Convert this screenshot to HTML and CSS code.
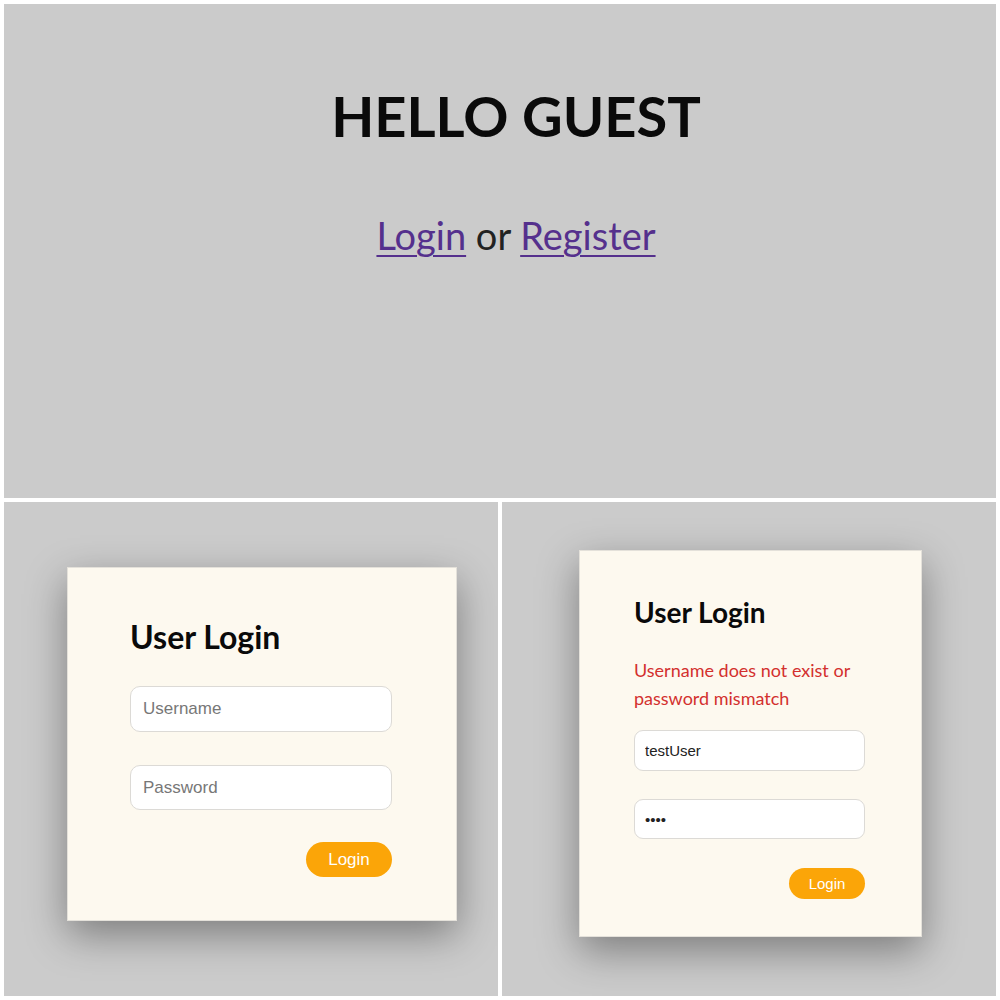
FILE: index.html
```html
<!DOCTYPE html>
<html>
<head>
<meta charset="utf-8">
<link rel="stylesheet" href="styles.css">
</head>
<body>
<div class="grid">
  <section class="panel panel-top">
    <h1 class="hello">HELLO GUEST</h1>
    <p class="links"><a href="#" class="link">Login</a> or <a href="#" class="link">Register</a></p>
  </section>
  <section class="panel panel-left">
    <div class="card card-lg">
      <h2 class="title">User Login</h2>
      <input class="field" type="text" placeholder="Username">
      <input class="field field-2" type="password" placeholder="Password">
      <div class="actions"><button class="btn">Login</button></div>
    </div>
  </section>
  <section class="panel panel-right">
    <div class="card card-sm">
      <h2 class="title">User Login</h2>
      <p class="error">Username does not exist or password mismatch</p>
      <input class="field" type="text" value="testUser">
      <input class="field field-2" type="password" value="abcd">
      <div class="actions"><button class="btn">Login</button></div>
    </div>
  </section>
</div>
</body>
</html>
```
FILE: styles.css
```css
* { box-sizing: border-box; }
html, body { margin: 0; padding: 0; background: #ffffff; }
body { width: 1000px; height: 1000px; padding: 4px; }
.grid {
  display: grid;
  grid-template-columns: 494px 494px;
  grid-template-rows: 494px 494px;
  gap: 4px;
}
.panel { background: #cbcbcb; overflow: hidden; }
.panel-top {
  grid-column: 1 / span 2;
  text-align: center;
  padding-top: 77px;
  padding-left: 32px;
  font-family: Lato, "Liberation Sans", sans-serif;
}
.hello {
  margin: 0;
  font-size: 56px;
  font-weight: 700;
  line-height: 70px;
  color: #0a0a0a;
}
.links {
  margin: 61px 0 0;
  font-size: 38px;
  line-height: 46px;
  color: #222;
}
.link { color: #55308d; text-decoration: underline; text-underline-offset: 5px; text-decoration-thickness: 2px; }

.panel-left { padding: 65px 0 0 63px; }
.panel-right { padding: 48px 0 0 77px; }

.card {
  background: #fdf9ef;
  border: 1px solid #e4e1da;
  box-shadow: 0 14px 38px rgba(0, 0, 0, 0.38);
  display: flex;
  flex-direction: column;
}
.card-lg { width: 390px; height: 354px; padding: 50px 64px 0 62px; }
.card-sm { width: 343px; height: 387px; padding: 44px 56px 0 54px; }

.title {
  margin: 0;
  font-family: Lato, "Liberation Sans", sans-serif;
  font-weight: 700;
  color: #0a0a0a;
}
.card-lg .title { font-size: 32px; line-height: 38px; }
.card-sm .title { font-size: 28px; line-height: 34px; }

.error {
  margin: 27px 0 0;
  font-family: Lato, "Liberation Sans", sans-serif;
  font-size: 18px;
  line-height: 28px;
  color: #d3302e;
}

.field {
  display: block;
  width: 100%;
  border: 1px solid #dcdad6;
  background: #ffffff;
  font-family: "Liberation Sans", Arial, sans-serif;
  color: #222;
  outline: none;
}
.field::placeholder { color: #777; }
.card-lg .field { height: 46px; margin-top: 30px; border-radius: 10px; padding: 0 12px; font-size: 17px; }
.card-lg .field-2 { margin-top: 33px; height: 45px; }
.card-sm .field { height: 41px; margin-top: 18px; border-radius: 9px; padding: 0 10px; font-size: 15px; }
.card-sm .field-2 { margin-top: 28px; height: 40px; }

.actions { display: flex; justify-content: flex-end; }
.btn {
  border: none;
  background: #fba508;
  color: #fff;
  font-family: "Liberation Sans", Arial, sans-serif;
  border-radius: 999px;
  padding: 0;
}
.card-lg .btn { width: 86px; height: 35px; font-size: 17px; margin-top: 32px; }
.card-sm .btn { width: 76px; height: 31px; font-size: 15px; margin-top: 29px; }
```
